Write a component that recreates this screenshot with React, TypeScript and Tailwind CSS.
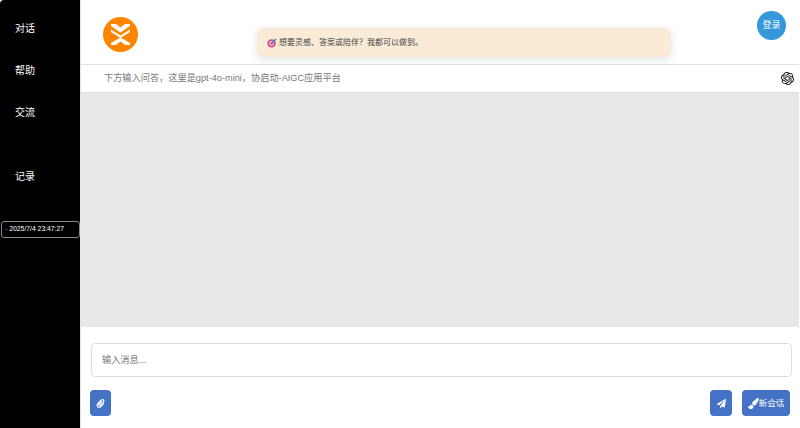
import React from 'react'
import { FaPaintBrush, FaPaperPlane, FaPaperclip } from 'react-icons/fa'
import { SiOpenai } from 'react-icons/si'

const font = "font-['Liberation_Sans','Noto_Sans_CJK_SC',sans-serif]"

function NavLink({ label, className }: { label: string; className: string }) {
  return <div className={`pl-[15px] text-[10px] leading-[14px] text-white ${className}`}>{label}</div>
}

function Logo() {
  return (
    <svg width="35" height="35" viewBox="0 0 35 35" aria-hidden="true">
      <circle cx="17.5" cy="17.5" r="17.5" fill="#ff8500" />
      <path d="M8 7 L13 7 L17.5 10.5 L22 7 L27 7 L27 9 L17.5 15.5 L8 9 Z" fill="#fff" />
      <path d="M8 12.5 L17.5 18.5 L27 12.5 L27 15 L17.5 21 L8 15 Z" fill="#fff" />
      <path d="M17.5 20.5 L27 26 L27 28 L22.5 28 L17.5 24.5 L12.5 28 L8 28 L8 26 Z" fill="#fff" />
    </svg>
  )
}

function Target() {
  return (
    <svg width="10" height="10" viewBox="0 0 10 10" aria-hidden="true" className="shrink-0">
      <circle cx="4.6" cy="5.4" r="4.2" fill="#d9467f" />
      <circle cx="4.6" cy="5.4" r="2.4" fill="#f6d7e2" />
      <circle cx="4.6" cy="5.4" r="1.2" fill="#c93a72" />
      <path d="M4.6 5.4 L9 1" stroke="#3b82d6" strokeWidth="1.4" />
    </svg>
  )
}

export default function App() {
  return (
    <div className={`flex h-[428px] w-[800px] overflow-hidden bg-white ${font}`}>
      <aside className="flex h-full w-[80px] shrink-0 flex-col rounded-tl-[4px] bg-black pt-[22px]">
        <NavLink label="对话" className="mb-[28px]" />
        <NavLink label="帮助" className="mb-[28px]" />
        <NavLink label="交流" className="mb-[50px]" />
        <NavLink label="记录" className="mb-[37px]" />
        <div className="mx-[1px] flex h-[17px] w-[79px] items-center rounded-[3px] border border-[#8a8a8a] pl-[3px] text-[6.8px] whitespace-nowrap text-white">
          <span className="mr-[2px] text-[#999]">-</span>2025/7/4 23:47:27
        </div>
      </aside>

      <main className="flex min-w-0 flex-1 flex-col border-l border-[#e4e4e4] pr-[1px]">
        <header className="flex h-[64px] items-start">
          <div className="ml-[22px] mt-[17px]">
            <Logo />
          </div>
          <div className="ml-[119px] mt-[28px] flex h-[29px] w-[414px] items-center gap-[2px] rounded-[6px] bg-[#faebd7] pl-[10px] text-[8px] text-[#444] shadow-[0_2px_8px_rgba(0,0,0,0.12)]">
            <Target />
            想要灵感、答案或陪伴？我都可以做到。
          </div>
          <button className="ml-[86px] mt-[11px] flex h-[29px] w-[29px] items-center justify-center rounded-full bg-[#3498db] text-[9px] text-white">
            登录
          </button>
        </header>

        <div className="flex h-[29px] items-center justify-between border-y border-[#dfdfdf] pl-[23px] pr-[5px] text-[9.2px] text-[#777]">
          <span>下方输入问答，这里是gpt-4o-mini，协启动-AIGC应用平台</span>
          <SiOpenai className="h-[13px] w-[13px] text-black" />
        </div>

        <div className="h-[234px] bg-[#e8e8e8]" />

        <div className="flex flex-1 flex-col px-[10px] pt-[16px]">
          <input
            placeholder="输入消息..."
            className="h-[34px] w-[701px] rounded-[4px] border border-[#dedede] px-[10px] text-[9.2px] outline-none placeholder:text-[#777]"
          />
          <div className="mt-[13px] -mx-[1px] flex items-start justify-between">
            <button className="flex h-[26px] w-[21px] items-center justify-center rounded-[4px] bg-[#4472c4] text-white">
              <FaPaperclip className="h-[9px] w-[9px]" />
            </button>
            <div className="flex gap-[10px]">
              <button className="flex h-[26px] w-[22px] items-center justify-center rounded-[4px] bg-[#4472c4] text-white">
                <FaPaperPlane className="h-[9px] w-[9px]" />
              </button>
              <button className="flex h-[26px] w-[48px] items-center justify-center rounded-[4px] bg-[#4472c4] text-[8.5px] text-white">
                <FaPaintBrush className="h-[11px] w-[11px]" />
                新会话
              </button>
            </div>
          </div>
        </div>
      </main>
    </div>
  )
}
